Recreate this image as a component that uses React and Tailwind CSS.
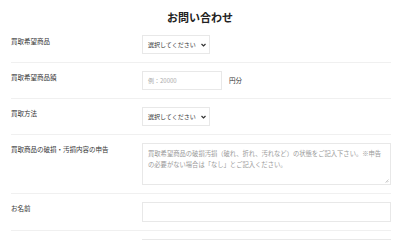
const font = { fontFamily: '"Noto Sans CJK JP", "Noto Sans", sans-serif' };

const Row = ({ label, children, last }) => (
  <div className={`flex py-2 ${last ? "" : "border-b border-[#f0f0f0]"}`}>
    <div className="w-[131px] shrink-0 pt-[1px] text-[6.5px] leading-[10px] text-[#333]">{label}</div>
    <div className="flex-1">{children}</div>
  </div>
);

const Select = () => (
  <div className="flex h-[19px] w-[68px] items-center justify-between border border-[#e8e8e8] bg-white pl-[5px] pr-[3px] text-[6px] text-[#333]">
    <span>選択してください</span>
    <svg width="5" height="4" viewBox="0 0 5 4">
      <path d="M0.5 1 L2.5 3 L4.5 1" fill="none" stroke="#333" strokeWidth="1.2" />
    </svg>
  </div>
);

export default function App() {
  return (
    <div className="h-[240px] w-[400px] overflow-hidden bg-white px-[11px]" style={font}>
      <h1 className="h-[27px] pt-[10px] text-center text-[11px] font-bold leading-[14px] text-[#222]">
        お問い合わせ
      </h1>
      <div className="w-[380px]">
        <Row label="買取希望商品">
          <Select />
        </Row>
        <Row label="買取希望商品額">
          <div className="flex items-center">
            <div className="flex h-[19px] w-[80px] items-center border border-[#e8e8e8] pl-[5px] text-[6px] text-[#aaa]">
              例：20000
            </div>
            <span className="ml-[7px] text-[6.5px] text-[#333]">円分</span>
          </div>
        </Row>
        <Row label="買取方法">
          <Select />
        </Row>
        <Row label="買取商品の破損・汚損内容の申告">
          <div className="relative h-[42px] w-[249px] border border-[#e8e8e8] px-[5px] pt-[5px] text-[6.3px] leading-[10.5px] text-[#999]">
            買取希望商品の破損汚損（破れ、折れ、汚れなど）の状態をご記入下さい。※申告の必要がない場合は「なし」とご記入ください。
            <svg className="absolute bottom-[1px] right-[1px]" width="4" height="4" viewBox="0 0 4 4">
              <path d="M0.5 3.5 L3.5 0.5 M2 3.5 L3.5 2" stroke="#aaa" strokeWidth="0.6" />
            </svg>
          </div>
        </Row>
        <Row label="お名前">
          <div className="h-[20px] w-[249px] border border-[#e8e8e8]"></div>
        </Row>
        <Row label="" last>
          <div className="h-[20px] w-[249px] border border-[#e8e8e8]"></div>
        </Row>
      </div>
    </div>
  );
}
